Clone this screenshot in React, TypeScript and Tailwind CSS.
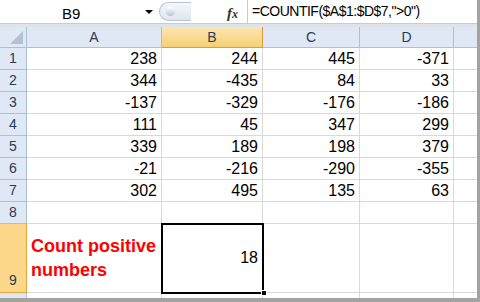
import React from 'react';

const DATA: number[][] = [
  [238, 244, 445, -371],
  [344, -435, 84, 33],
  [-137, -329, -176, -186],
  [111, 45, 347, 299],
  [339, 189, 198, 379],
  [-21, -216, -290, -355],
  [302, 495, 135, 63],
];

const COLS = ['w-[135px]', 'w-[101px]', 'w-[97px]', 'w-[94px]'];
const LETTERS = ['A', 'B', 'C', 'D'];

const RowHead: React.FC<{ n: number; h: string; sel?: boolean }> = ({ n, h, sel }) => (
  <div
    className={`w-[27px] shrink-0 ${h} flex justify-center border-r border-b ${
      sel
        ? 'bg-[#fdd88b] border-[#e8a33c] items-end pb-[1px]'
        : 'bg-[#dfe8f4] border-[#a9c0d9] items-center'
    } text-[14px] text-[#2a3b55]`}
  >
    {n}
  </div>
);

const App: React.FC = () => {
  return (
    <div className="w-[480px] h-[302px] overflow-hidden bg-[#a3a3a3] font-['Liberation_Sans',Arial,sans-serif]">
      <div className="w-[477px] h-[298px] bg-white overflow-hidden">
        {/* formula bar */}
        <div className="h-[24px] flex items-stretch bg-white border-b border-[#c5ccd6]">
          <div className="w-[159px] shrink-0 relative">
            <span className="absolute left-[62px] top-[3px] text-[15px] text-black">B9</span>
            <span className="absolute left-[145px] top-[10px] w-0 h-0 border-l-[4px] border-r-[4px] border-t-[4px] border-l-transparent border-r-transparent border-t-black" />
          </div>
          <div className="w-[88px] shrink-0 relative">
            <div className="absolute left-0 top-[2px] w-[32px] h-[19px] rounded-l-full border border-r-0 border-[#b7c3d3] bg-gradient-to-b from-[#f4f7fb] to-[#dfe6ef]">
              <div className="absolute left-[6px] top-[4px] w-[9px] h-[9px] rounded-full bg-gradient-to-b from-[#ffffff] to-[#b9c3cf]" />
            </div>
            <span className="absolute left-[68px] top-[2px] text-[15px] italic font-bold font-['Liberation_Serif',serif] text-[#333]">
              f<span className="text-[12px]">x</span>
            </span>
          </div>
          <div className="flex-1 border-l border-[#c5ccd6] flex items-center pl-[4px] text-[14px] tracking-[-0.5px] text-black">
            =COUNTIF($A$1:$D$7,"&gt;0")
          </div>
        </div>
        <div className="h-[3px] bg-[#dfe3ea]" />

        {/* column headers */}
        <div className="flex h-[21px]">
          <div className="w-[27px] shrink-0 border-r border-b border-[#a9c0d9] bg-[#dfe8f4] relative">
            <svg className="absolute right-[3px] bottom-[3px]" width="13" height="13" viewBox="0 0 13 13">
              <polygon points="13,0 13,13 0,13" fill="#b5c1cf" />
            </svg>
          </div>
          {LETTERS.map((l, i) => (
            <div
              key={l}
              className={`${COLS[i]} shrink-0 flex items-center justify-center border-r border-b text-[14px] text-[#2a3b55] ${
                i === 1
                  ? 'bg-gradient-to-b from-[#fbe6b2] to-[#f7cf72] border-[#e39a3a]'
                  : 'bg-[#dfe8f4] border-[#a9c0d9]'
              }`}
            >
              {l}
            </div>
          ))}
          <div className="flex-1 border-b border-[#a9c0d9] bg-[#dfe8f4]" />
        </div>

        {/* data rows */}
        {DATA.map((row, r) => (
          <div key={r} className="flex h-[22px]">
            <RowHead n={r + 1} h="h-[22px]" />
            {row.map((v, c) => (
              <div
                key={c}
                className={`${COLS[c]} shrink-0 flex items-center justify-end pr-[4px] border-r border-b border-[#d9d9d9] text-[16px] text-black`}
              >
                {v}
              </div>
            ))}
            <div className="flex-1 border-b border-[#d9d9d9]" />
          </div>
        ))}

        {/* row 8 */}
        <div className="flex h-[22px]">
          <RowHead n={8} h="h-[22px]" />
          {COLS.map((w, c) => (
            <div key={c} className={`${w} shrink-0 border-r border-b border-[#d9d9d9]`} />
          ))}
          <div className="flex-1 border-b border-[#d9d9d9]" />
        </div>

        {/* row 9 */}
        <div className="flex h-[69px]">
          <RowHead n={9} h="h-[69px]" sel />
          <div className="w-[135px] shrink-0 flex items-center pl-[4px] border-r border-b border-[#d9d9d9] text-[18px] leading-[24px] font-bold text-[#ff0000]">
            Count positive numbers
          </div>
          <div className="w-[101px] shrink-0 relative flex items-center justify-end pr-[5px] border-b border-[#d9d9d9] text-[16px] text-black">
            <div className="absolute left-[-1px] top-[-1px] w-[103px] h-[71px] border-2 border-black" />
            <div className="absolute right-[-4px] bottom-[-4px] w-[6px] h-[6px] bg-black border border-white" />
            18
          </div>
          <div className="w-[97px] shrink-0 border-r border-b border-[#d9d9d9]" />
          <div className="w-[94px] shrink-0 border-r border-b border-[#d9d9d9]" />
          <div className="flex-1 border-b border-[#d9d9d9]" />
        </div>

        {/* row 10 partial */}
        <div className="flex h-[10px]">
          <div className="w-[27px] shrink-0 h-full border-r border-[#a9c0d9] bg-[#dfe8f4]" />
          {COLS.map((w, c) => (
            <div key={c} className={`${w} shrink-0 border-r border-[#d9d9d9]`} />
          ))}
        </div>
      </div>
    </div>
  );
};

export default App;
